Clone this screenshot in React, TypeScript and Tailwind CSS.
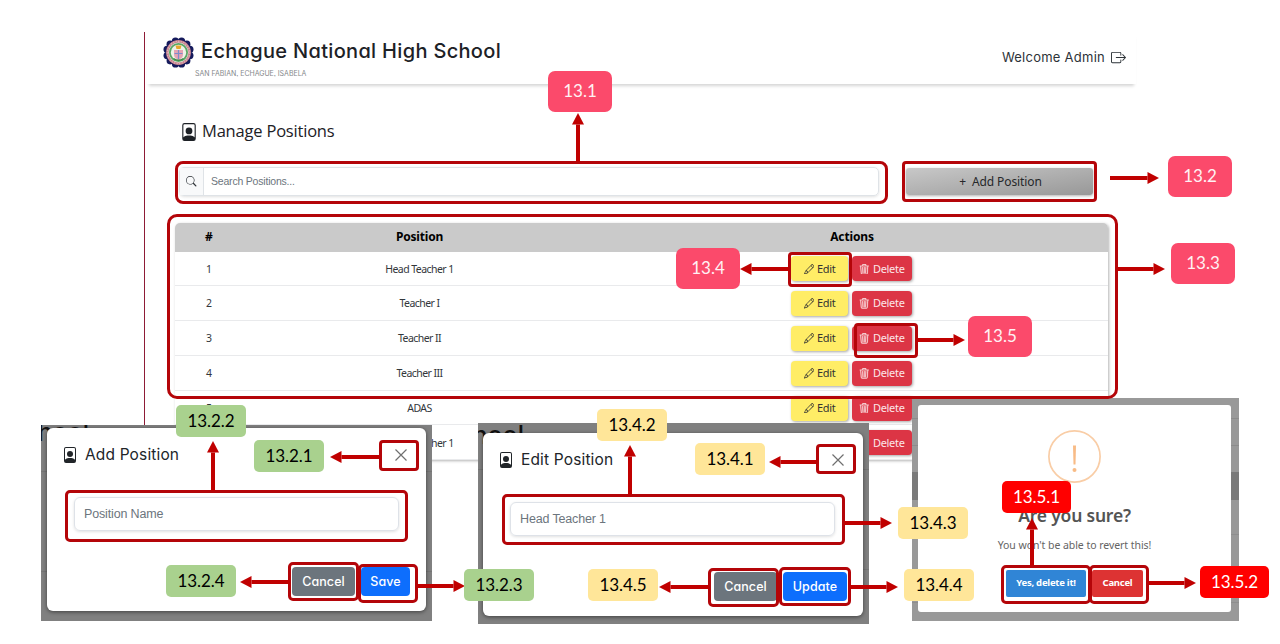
import React from "react";
import { BsBoxArrowRight, BsFilePerson, BsPencil, BsSearch, BsTrash3 } from "react-icons/bs";

const poppins = "font-['Inter'] [font-feature-settings:'cv11','ss03']";
const segoe = "font-['Noto_Sans',sans-serif]";
const arial = "font-['Liberation_Sans',sans-serif]";

function Seal() {
  const petals = Array.from({ length: 12 }, (_, i) => {
    const a = ((i + 0.5) * Math.PI) / 6;
    return { x: 15.5 + 11.8 * Math.cos(a), y: 15.5 + 11.8 * Math.sin(a) };
  });
  return (
    <svg width="31" height="31" viewBox="0 0 31 31">
      {petals.map((p, i) => (
        <circle key={i} cx={p.x} cy={p.y} r="3.6" fill="#151a5c" />
      ))}
      <circle cx="15.5" cy="15.5" r="12.4" fill="#c9808c" />
      <circle cx="15.5" cy="15.5" r="11.2" fill="none" stroke="#dcb4b8" strokeWidth="1.2" strokeDasharray="1.4 1.2" />
      <circle cx="15.5" cy="15.5" r="10" fill="#edf2e8" />
      <circle cx="15.5" cy="15.5" r="8.6" fill="none" stroke="#5aa566" strokeWidth="1.8" />
      <path d="M12.500 8.500h6l-1 3.500h-4z" fill="#e9a92c" />
      <path d="M11 13h9v5c0 2.500-2.500 4-4.500 5-2-1-4.500-2.500-4.500-5z" fill="#e5a3b4" />
      <path d="M15.500 13v9M11.500 16.500h8" stroke="#7c8cca" strokeWidth="1.200" />
      <path d="M10.500 21.500q5 3.500 10 0" stroke="#3c8a4a" strokeWidth="1.400" fill="none" />
    </svg>
  );
}

const rows = ["Head Teacher 1", "Teacher I", "Teacher II", "Teacher III", "ADAS", "Head Teacher 1"];

function TableRow({ n, name }: { n: number; name: string }) {
  return (
    <div className="flex h-[34.8px] items-center border-b border-[#e9eaec] pt-[1px] text-center text-[10.5px] text-[#33373b]">
      <div className="w-[68px] pt-[1px]">{n}</div>
      <div className="w-[353px] pt-[1px] tracking-[-0.55px]">{name}</div>
      <div className="flex flex-1 justify-center gap-[4px] pr-[1px] text-[11px] tracking-[-0.3px]">
        <div className="flex h-[25px] w-[57px] items-center justify-center gap-[3px] rounded-[4px] bg-[#ffed66] text-[#333] shadow-[1px_1px_3px_rgba(0,0,0,0.35)]">
          <BsPencil size={10.5} />
          <span>Edit</span>
        </div>
        <div className="flex h-[25px] w-[60px] items-center justify-center gap-[3px] rounded-[4px] bg-[#dc3545] text-[#fbe6e8] shadow-[1px_1px_3px_rgba(0,0,0,0.35)]">
          <BsTrash3 size={10.5} strokeWidth={0.4} />
          <span>Delete</span>
        </div>
      </div>
    </div>
  );
}

function MainScreen() {
  return (
    <div className="ml-[144px] mt-[32px] h-[430px] w-[992px] border-l border-[#8e1b36]">
      <header className="ml-[2px] flex h-[52px] items-start justify-between pl-[16px] pr-[10px] shadow-[0_4px_3px_-2px_rgba(0,0,0,0.17)]">
        <div className="flex pt-[5px]">
          <Seal />
          <div className="flex flex-col">
            <div className={`${poppins} ml-[7px] mt-[1px] h-[26px] text-[20px] font-medium leading-[26px] tracking-[0.32px] whitespace-nowrap text-[#1d2126]`}>
              Echague National High School
            </div>
            <div className={`${poppins} ml-[1px] mt-[5px] text-[7px] leading-[9px] tracking-[-0.02px] whitespace-nowrap text-[#85888b]`}>
              SAN FABIAN, ECHAGUE, ISABELA
            </div>
          </div>
        </div>
        <div className="flex items-center gap-[6px] pt-[15px] text-[#2d3338]">
          <span className={`${poppins} text-[13px] leading-[20px] tracking-[0.25px]`}>Welcome Admin</span>
          <BsBoxArrowRight size={15} />
        </div>
      </header>
      <div className="ml-[35px] mt-[37px] flex h-[21px] items-center gap-[4px] text-[#1d2126]">
        <BsFilePerson size={18} />
        <h1 className="font-['Open_Sans',sans-serif] text-[16.5px] tracking-[-0.2px]">Manage Positions</h1>
      </div>
      <div className="ml-[34px] mt-[25px] flex h-[29px] items-center">
        <div className="flex h-[29px] w-[700px] rounded-[5px] border border-[#dfe3e7] shadow-[0_1px_3px_rgba(0,0,0,0.12)]">
          <div className="flex w-[24px] items-center justify-center border-r border-[#dfe3e7] bg-[#f8f9fa] text-[#30353a]">
            <BsSearch size={10.5} />
          </div>
          <div className={`${arial} flex items-center pl-[7px] text-[10.5px] tracking-[-0.2px] text-[#6c757d]`}>Search Positions...</div>
        </div>
        <div className={`${segoe} ml-[27px] flex h-[27px] w-[187px] items-center justify-center gap-[6px] rounded-[3px] bg-linear-to-br from-[#c8c8c8] to-[#989898] pl-[2px] text-[12px] tracking-[-0.1px] text-[#26282a] shadow-[0_1px_3px_rgba(0,0,0,0.3)]`}>
          <span>+</span>
          <span>Add Position</span>
        </div>
      </div>
      <div className={`${segoe} ml-[30px] mt-[27px] w-[933px] rounded-t-[5px] shadow-[1px_1px_3px_rgba(0,0,0,0.3)]`}>
        <div className="flex h-[28.5px] items-center rounded-t-[5px] bg-[#cacaca] text-center text-[12px] font-bold text-black">
          <div className="w-[68px]">#</div>
          <div className="w-[353px] tracking-[-0.2px]">Position</div>
          <div className="flex-1 tracking-[-0.15px]">Actions</div>
        </div>
        {rows.map((r, i) => (
          <TableRow key={i} n={i + 1} name={r} />
        ))}
      </div>
    </div>
  );
}

function Cross() {
  return (
    <svg width="12" height="12" viewBox="0 0 12 12" stroke="#6f6f6f" strokeWidth="1.2">
      <path d="M0.500 0.500l11 11M11.500 0.500l-11 11" />
    </svg>
  );
}

type FormProps = { place: string; behind: string; inset: string; title: string; field: string; action: string; actionSize: string };

function FormDialog({ place, behind, inset, title, field, action, actionSize }: FormProps) {
  return (
    <div className={`absolute overflow-hidden bg-[#808080] ${place}`}>
      <div className={`${poppins} absolute text-[25px] font-medium leading-[30px] text-[#111] ${behind}`}>School</div>
      <div className="absolute inset-x-0 top-[46px] h-[101px] border-y border-[#757575]" />
      <div className={`relative flex h-[183px] flex-col rounded-[6px] bg-white shadow-[0_1px_4px_rgba(0,0,0,0.5)] ${inset}`}>
        <div className="flex h-[54px] items-center pl-[15px] pr-[19px] text-[#212529]">
          <BsFilePerson size={16} />
          <h2 className={`${poppins} ml-[7px] flex-1 text-[15.5px] tracking-[0.15px]`}>{title}</h2>
          <Cross />
        </div>
        <div className={`${arial} ml-[27px] mt-[15px] flex h-[34px] w-[325px] items-center rounded-[6px] border border-[#dee2e8] pl-[9px] text-[12.5px] tracking-[-0.15px] text-[#6c757d] shadow-[0_1px_3px_rgba(0,0,0,0.12)]`}>
          {field}
        </div>
        <div className={`${poppins} mt-[36px] flex justify-end gap-[6px] pr-[16px] text-[12.5px] font-medium tracking-[0.1px] text-white`}>
          <div className="flex h-[29px] w-[63px] items-center justify-center rounded-[4px] bg-[#6c757d] pt-[1px]">Cancel</div>
          <div className={`flex h-[29px] items-center justify-center rounded-[4px] bg-[#0d6efd] pt-[1px] ${actionSize}`}>{action}</div>
        </div>
      </div>
    </div>
  );
}

function ConfirmDialog() {
  return (
    <div className="absolute left-[912px] top-[398px] h-[223px] w-[327px] bg-[#999]">
      <div className="absolute inset-x-0 top-[20px] h-[28px] border-y border-[#8b8b8b]" />
      <div className="absolute inset-x-0 top-[74px] h-[28px] bg-[#7a7a7a]" />
      <div className="absolute inset-x-0 top-[136px] h-[69px] border-y border-[#8e8e8e]" />
      <div className={`${segoe} relative ml-[6px] mt-[7px] flex h-[207px] w-[313px] flex-col items-center rounded-[3px] bg-white pt-[25px]`}>
        <svg width="53" height="53" viewBox="0 0 53 53">
          <circle cx="26.500" cy="26.500" r="25.600" fill="none" stroke="#f9cda6" strokeWidth="1.700" />
          <path d="M25 15.500h3l-.5 19h-2z" fill="#f8bb86" />
          <circle cx="26.500" cy="40" r="2" fill="#f8bb86" />
        </svg>
        <div className="mt-[19px] h-[26px] text-[17.5px] font-semibold leading-[26px] tracking-[-0.2px] text-[#545454]">Are you sure?</div>
        <div className="mt-[9px] h-[16px] text-[10.5px] leading-[16px] tracking-[-0.05px] text-[#646464]">You won't be able to revert this!</div>
        <div className="mt-[17px] flex gap-[6px] text-[9.5px] font-bold tracking-[-0.25px] text-white">
          <div className="flex h-[27px] w-[80px] items-center justify-center rounded-[2px] bg-[#3085d6]">Yes, delete it!</div>
          <div className="flex h-[27px] w-[51px] items-center justify-center rounded-[2px] bg-[#dd3333]">Cancel</div>
        </div>
      </div>
    </div>
  );
}

const frames = [
  "left-[175px] top-[161px] h-[43px] w-[713px] rounded-[8px]",
  "left-[902px] top-[161px] h-[41px] w-[195px] rounded-[4px]",
  "left-[167px] top-[214px] h-[185px] w-[951px] rounded-[10px]",
  "left-[788px] top-[252px] h-[35px] w-[64px] rounded-[4px]",
  "left-[854px] top-[323px] h-[35px] w-[64px] rounded-[4px]",
  "left-[65px] top-[490px] h-[52px] w-[343px] rounded-[5px]",
  "left-[379px] top-[440px] h-[31px] w-[40px] rounded-[4px]",
  "left-[288px] top-[562px] h-[39px] w-[71px] rounded-[5px]",
  "left-[358px] top-[564px] h-[39px] w-[60px] rounded-[5px]",
  "left-[502px] top-[494px] h-[51px] w-[343px] rounded-[5px]",
  "left-[816px] top-[444px] h-[30px] w-[40px] rounded-[4px]",
  "left-[708px] top-[568px] h-[39px] w-[71px] rounded-[5px]",
  "left-[779px] top-[567px] h-[39px] w-[72px] rounded-[5px]",
  "left-[1001px] top-[565px] h-[39px] w-[90px] rounded-[5px]",
  "left-[1089px] top-[565px] h-[39px] w-[60px] rounded-[5px]",
];

const pink = "h-[41px] w-[64px] rounded-[7px] bg-[#fb4a6b] text-[#fff1f3]";
const green = "h-[32px] w-[70px] rounded-[5px] bg-[#a9d18e] text-black";
const yellow = "h-[32px] w-[70px] rounded-[5px] bg-[#ffe699] text-black";
const red = "h-[32px] w-[69px] rounded-[5px] bg-[#ff0000] text-white";

const tags: [string, string, string][] = [
  ["13.1", "left-[548px] top-[71px]", pink],
  ["13.2", "left-[1168px] top-[156px]", pink],
  ["13.3", "left-[1171px] top-[243px]", pink],
  ["13.4", "left-[676px] top-[248px]", pink],
  ["13.5", "left-[968px] top-[316px]", pink],
  ["13.2.2", "left-[176px] top-[405px]", green],
  ["13.2.1", "left-[254px] top-[440px]", green],
  ["13.2.4", "left-[166px] top-[565px]", green],
  ["13.2.3", "left-[464px] top-[569px]", green],
  ["13.4.2", "left-[597px] top-[409px]", yellow],
  ["13.4.1", "left-[695px] top-[443px]", yellow],
  ["13.4.3", "left-[898px] top-[507px]", yellow],
  ["13.4.5", "left-[588px] top-[569px]", yellow],
  ["13.4.4", "left-[904px] top-[569px]", yellow],
  ["13.5.1", "left-[1002px] top-[481px]", red],
  ["13.5.2", "left-[1200px] top-[566px]", red],
];

type Arrow = [number, number, number, number];
const arrows: Arrow[] = [
  [578, 162, 578, 113],
  [1110, 178, 1159, 178],
  [1117, 269, 1165, 269],
  [789, 269, 740, 269],
  [917, 340, 965, 340],
  [213, 491, 213, 441],
  [380, 457, 330, 457],
  [290, 582, 240, 582],
  [417, 586, 465, 586],
  [630, 495, 630, 445],
  [817, 462, 769, 462],
  [844, 523, 892, 523],
  [709, 587, 659, 587],
  [850, 587, 898, 587],
  [1032, 566, 1032, 518],
  [1148, 583, 1196, 583],
];

function ArrowMark({ a: [x1, y1, x2, y2] }: { a: Arrow }) {
  const dx = Math.sign(x2 - x1);
  const dy = Math.sign(y2 - y1);
  const bx = x2 - dx * 11.5;
  const by = y2 - dy * 11.5;
  return (
    <g>
      <line x1={x1} y1={y1} x2={bx} y2={by} stroke="#c00000" strokeWidth="4" />
      <polygon points={`${x2},${y2} ${bx + dy * 6},${by + dx * 6} ${bx - dy * 6},${by - dx * 6}`} fill="#c00000" />
    </g>
  );
}

export default function App() {
  return (
    <div className="relative flex h-[644px] w-[1280px] items-start overflow-hidden bg-white">
      <MainScreen />
      <FormDialog
        place="left-[41px] top-[425px] h-[196px] w-[391px]"
        behind="right-[343px] top-[-8px]"
        inset="ml-[6px] mt-[3px] w-[379px]"
        title="Add Position"
        field="Position Name"
        action="Save"
        actionSize="w-[49px]"
      />
      <FormDialog
        place="left-[478px] top-[423px] h-[201px] w-[391px]"
        behind="right-[345px] top-[-3px]"
        inset="ml-[5px] mt-[10px] w-[380px]"
        title="Edit Position"
        field="Head Teacher 1"
        action="Update"
        actionSize="w-[64px]"
      />
      <ConfirmDialog />
      {frames.map((f) => (
        <div key={f} className={`absolute border-[3px] border-[#b40509] ${f}`} />
      ))}
      <svg className="absolute left-0 top-0" width="1280" height="644" viewBox="0 0 1280 644">
        {arrows.map((a, i) => (
          <ArrowMark key={i} a={a} />
        ))}
      </svg>
      {tags.map(([label, place, look]) => (
        <div key={label} className={`absolute flex items-center justify-center pb-[1px] font-['Lato',sans-serif] text-[17px] tracking-[-0.05px] ${place} ${look}`}>
          {label}
        </div>
      ))}
    </div>
  );
}
